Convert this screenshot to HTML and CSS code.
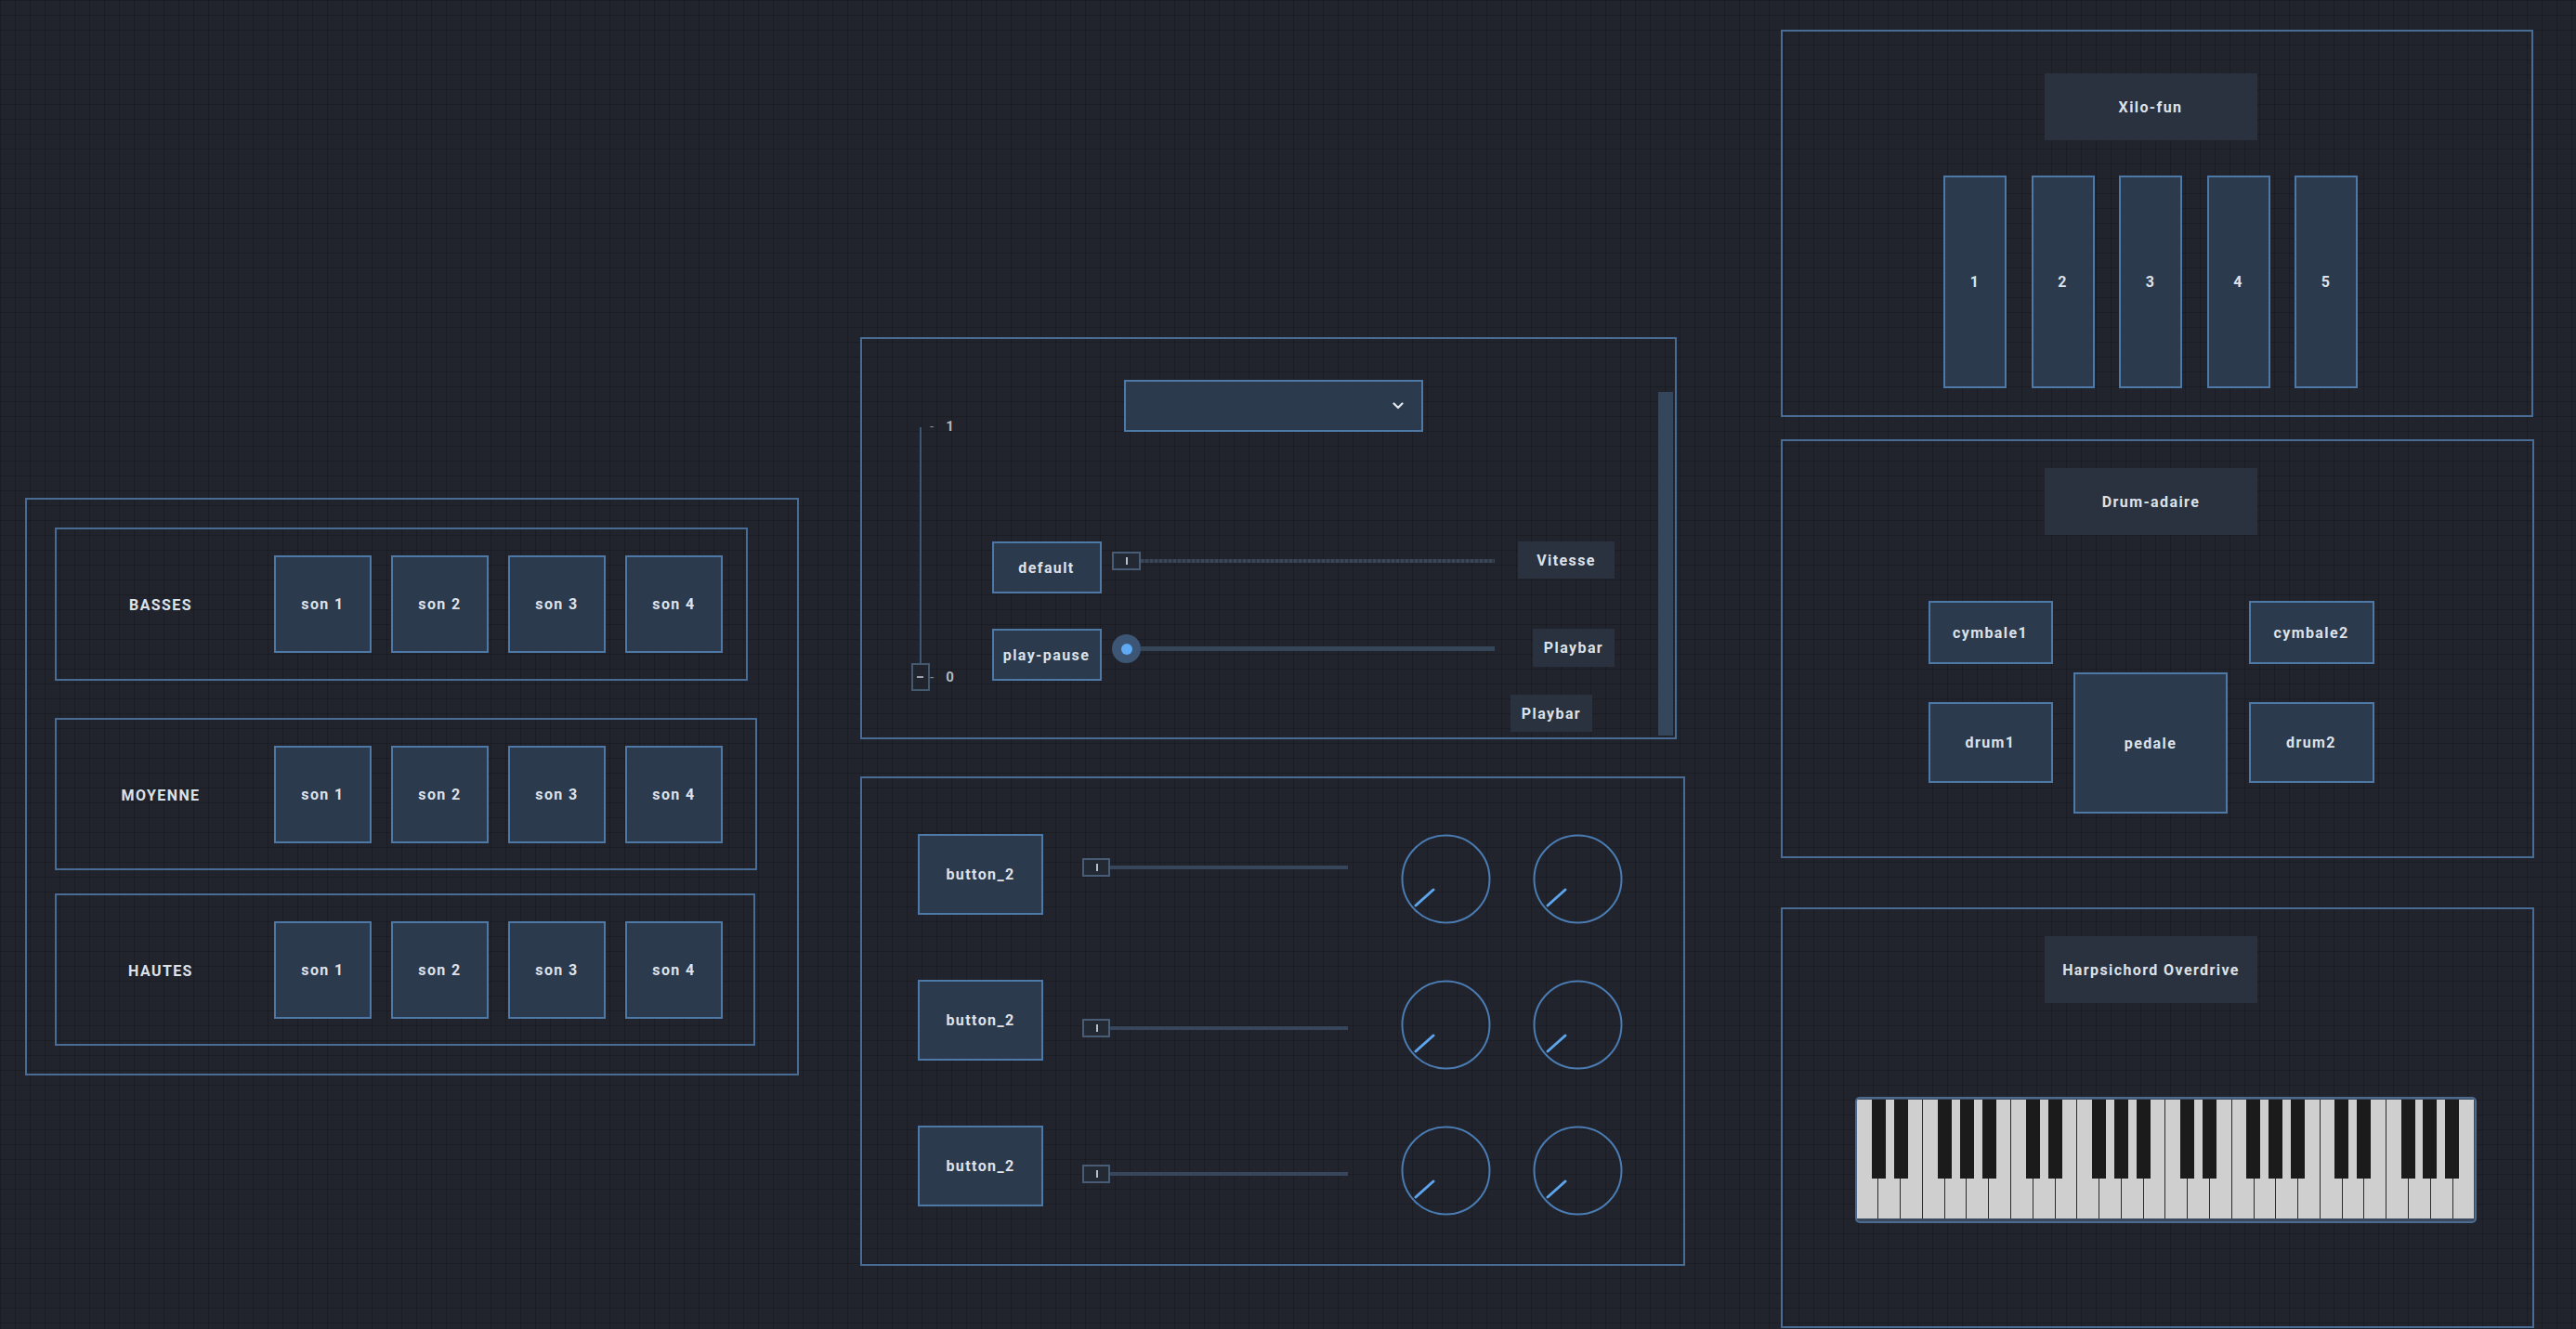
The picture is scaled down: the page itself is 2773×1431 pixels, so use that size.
FILE: index.html
```html
<!DOCTYPE html>
<html lang="en">
<head>
  <meta charset="UTF-8" />
  <title>Soundboard</title>
  <link rel="stylesheet" href="styles.css">
</head>
<body>
  <div class="canvas">

    <!-- left: sound banks -->
    <div class="col col-left">
      <div class="panel panel-banks">
        <div class="bank">
          <div class="bank-label">BASSES</div>
          <div class="pad">son 1</div>
          <div class="pad">son 2</div>
          <div class="pad">son 3</div>
          <div class="pad">son 4</div>
        </div>
        <div class="bank bank-wide bank-mid">
          <div class="bank-label">MOYENNE</div>
          <div class="pad">son 1</div>
          <div class="pad">son 2</div>
          <div class="pad">son 3</div>
          <div class="pad">son 4</div>
        </div>
        <div class="bank bank-wide bank-high">
          <div class="bank-label">HAUTES</div>
          <div class="pad">son 1</div>
          <div class="pad">son 2</div>
          <div class="pad">son 3</div>
          <div class="pad">son 4</div>
        </div>
      </div>
    </div>

    <!-- middle: player + mixer -->
    <div class="col col-mid">
      <div class="panel panel-player">
        <div class="vslider-col">
          <div class="vslider">
            <div class="vslider-track"></div>
            <div class="vtick vtick-top"><span class="dash">-</span><span class="num">1</span></div>
            <div class="vtick vtick-bottom"><span class="dash">-</span><span class="num">0</span></div>
            <div class="vslider-thumb"><span></span></div>
          </div>
        </div>

        <div class="player-main">
          <div class="dropdown">
            <svg class="chevron" width="12" height="8" viewBox="0 0 12 8"><polyline points="1.5,1.5 6,6 10.5,1.5" fill="none" stroke="#e3e8ef" stroke-width="2.2" stroke-linecap="round" stroke-linejoin="round"/></svg>
          </div>

          <div class="player-row">
            <div class="btn btn-player">default</div>
            <div class="slider slider-square slider-speed">
              <div class="thumb-square"><span></span></div>
              <div class="track track-dashed"></div>
            </div>
            <div class="tag tag-speed">Vitesse</div>
          </div>

          <div class="player-row player-row-2">
            <div class="btn btn-player">play-pause</div>
            <div class="slider slider-round">
              <div class="thumb-round"><span></span></div>
              <div class="track track-play"></div>
            </div>
            <div class="tag tag-play">Playbar</div>
          </div>

          <div class="tag tag-play tag-play-2">Playbar</div>
        </div>

        <div class="scrollbar"></div>
      </div>

      <div class="panel panel-mixer">
        <div class="mix-row">
          <div class="btn btn-mix">button_2</div>
          <div class="slider slider-square slider-mix slider-up">
            <div class="thumb-square"><span></span></div>
            <div class="track track-mix"></div>
          </div>
          <svg class="knob" width="97" height="97" viewBox="0 0 97 97"><circle cx="48.5" cy="48.5" r="47" fill="none" stroke="#4a7cb3" stroke-width="2"/><line x1="35" y1="60" x2="16" y2="77" stroke="#5ca4eb" stroke-width="3" stroke-linecap="round"/></svg>
          <svg class="knob knob-2" width="97" height="97" viewBox="0 0 97 97"><circle cx="48.5" cy="48.5" r="47" fill="none" stroke="#4a7cb3" stroke-width="2"/><line x1="35" y1="60" x2="16" y2="77" stroke="#5ca4eb" stroke-width="3" stroke-linecap="round"/></svg>
        </div>
        <div class="mix-row">
          <div class="btn btn-mix">button_2</div>
          <div class="slider slider-square slider-mix">
            <div class="thumb-square"><span></span></div>
            <div class="track track-mix"></div>
          </div>
          <svg class="knob" width="97" height="97" viewBox="0 0 97 97"><circle cx="48.5" cy="48.5" r="47" fill="none" stroke="#4a7cb3" stroke-width="2"/><line x1="35" y1="60" x2="16" y2="77" stroke="#5ca4eb" stroke-width="3" stroke-linecap="round"/></svg>
          <svg class="knob knob-2" width="97" height="97" viewBox="0 0 97 97"><circle cx="48.5" cy="48.5" r="47" fill="none" stroke="#4a7cb3" stroke-width="2"/><line x1="35" y1="60" x2="16" y2="77" stroke="#5ca4eb" stroke-width="3" stroke-linecap="round"/></svg>
        </div>
        <div class="mix-row">
          <div class="btn btn-mix">button_2</div>
          <div class="slider slider-square slider-mix">
            <div class="thumb-square"><span></span></div>
            <div class="track track-mix"></div>
          </div>
          <svg class="knob" width="97" height="97" viewBox="0 0 97 97"><circle cx="48.5" cy="48.5" r="47" fill="none" stroke="#4a7cb3" stroke-width="2"/><line x1="35" y1="60" x2="16" y2="77" stroke="#5ca4eb" stroke-width="3" stroke-linecap="round"/></svg>
          <svg class="knob knob-2" width="97" height="97" viewBox="0 0 97 97"><circle cx="48.5" cy="48.5" r="47" fill="none" stroke="#4a7cb3" stroke-width="2"/><line x1="35" y1="60" x2="16" y2="77" stroke="#5ca4eb" stroke-width="3" stroke-linecap="round"/></svg>
        </div>
      </div>
    </div>

    <!-- right: instruments -->
    <div class="col col-right">
      <div class="panel panel-inst panel-xylo">
        <div class="title-box">Xilo-fun</div>
        <div class="xylo">
          <div class="btn bar">1</div>
          <div class="btn bar">2</div>
          <div class="btn bar">3</div>
          <div class="btn bar">4</div>
          <div class="btn bar">5</div>
        </div>
      </div>

      <div class="panel panel-inst panel-drum">
        <div class="title-box">Drum-adaire</div>
        <div class="drumkit">
          <div class="drum-col">
            <div class="btn cymbal">cymbale1</div>
            <div class="btn drum">drum1</div>
          </div>
          <div class="btn pedal">pedale</div>
          <div class="drum-col drum-col-right">
            <div class="btn cymbal">cymbale2</div>
            <div class="btn drum">drum2</div>
          </div>
        </div>
      </div>

      <div class="panel panel-inst panel-harp">
        <div class="title-box">Harpsichord Overdrive</div>
        <div class="keyboard">
          <div class="white-keys">
            <div class="wkey"></div><div class="wkey"></div><div class="wkey"></div><div class="wkey"></div><div class="wkey"></div><div class="wkey"></div><div class="wkey"></div>
            <div class="wkey"></div><div class="wkey"></div><div class="wkey"></div><div class="wkey"></div><div class="wkey"></div><div class="wkey"></div><div class="wkey"></div>
            <div class="wkey"></div><div class="wkey"></div><div class="wkey"></div><div class="wkey"></div><div class="wkey"></div><div class="wkey"></div><div class="wkey"></div>
            <div class="wkey"></div><div class="wkey"></div><div class="wkey"></div><div class="wkey"></div><div class="wkey"></div><div class="wkey"></div><div class="wkey"></div>
          </div>
          <div class="bkey" style="left: 3.5714%"></div>
          <div class="bkey" style="left: 7.1429%"></div>
          <div class="bkey" style="left: 14.2857%"></div>
          <div class="bkey" style="left: 17.8571%"></div>
          <div class="bkey" style="left: 21.4286%"></div>
          <div class="bkey" style="left: 28.5714%"></div>
          <div class="bkey" style="left: 32.1429%"></div>
          <div class="bkey" style="left: 39.2857%"></div>
          <div class="bkey" style="left: 42.8571%"></div>
          <div class="bkey" style="left: 46.4286%"></div>
          <div class="bkey" style="left: 53.5714%"></div>
          <div class="bkey" style="left: 57.1429%"></div>
          <div class="bkey" style="left: 64.2857%"></div>
          <div class="bkey" style="left: 67.8571%"></div>
          <div class="bkey" style="left: 71.4286%"></div>
          <div class="bkey" style="left: 78.5714%"></div>
          <div class="bkey" style="left: 82.1429%"></div>
          <div class="bkey" style="left: 89.2857%"></div>
          <div class="bkey" style="left: 92.8571%"></div>
          <div class="bkey" style="left: 96.4286%"></div>
        </div>
      </div>
    </div>

  </div>
</body>
</html>
```

FILE: styles.css
```css
html, body {
  margin: 0;
  padding: 0;
}

body {
  width: 2773px;
  height: 1431px;
  overflow: hidden;
  font-family: Roboto, "Liberation Sans", sans-serif;
  font-size: 16px;
  font-weight: 700;
  letter-spacing: 1.4px;
  color: #dde2ea;
  background-color: #21242c;
  background-image:
    linear-gradient(rgba(10, 12, 16, 0.28) 1px, transparent 1px),
    linear-gradient(90deg, rgba(10, 12, 16, 0.28) 1px, transparent 1px);
  background-size: 16px 16px;
}

* {
  box-sizing: border-box;
}

.canvas {
  display: flex;
  align-items: flex-start;
}

.col {
  display: flex;
  flex-direction: column;
}

.col-left {
  margin-left: 27px;
  margin-top: 536px;
}

.col-mid {
  margin-left: 66px;
  margin-top: 363px;
}

.col-right {
  margin-left: 103px;
  margin-top: 32px;
}

.panel {
  border: 2px solid #486c94;
}

/* generic button look */
.btn, .pad {
  display: flex;
  align-items: center;
  justify-content: center;
  background: #2c3a4d;
  border: 2px solid #4e78a5;
}

/* ---------- sound banks ---------- */
.panel-banks {
  width: 833px;
  height: 622px;
  padding: 30px;
}

.bank {
  display: flex;
  align-items: center;
  width: 746px;
  height: 165px;
  border: 2px solid #486c94;
}

.bank-wide {
  height: 164px;
}

.bank-mid {
  width: 756px;
  margin-top: 40px;
}

.bank-high {
  width: 754px;
  margin-top: 25px;
}

.bank-label {
  width: 224px;
  margin-right: 10px;
  margin-top: 2px;
  text-align: center;
}

.pad {
  width: 105px;
  height: 105px;
  margin-right: 21px;
}

/* ---------- player ---------- */
.panel-player {
  display: flex;
  width: 879px;
  height: 433px;
}

.vslider-col {
  width: 139.5px;
  flex-shrink: 0;
}

.vslider {
  position: relative;
  margin-left: 53px;
  margin-top: 95px;
  width: 60px;
  height: 285px;
}

.vslider-track {
  position: absolute;
  left: 9px;
  top: 0;
  width: 2px;
  height: 256px;
  background: #3c5878;
}

.vslider-thumb {
  position: absolute;
  left: 0;
  top: 254px;
  width: 20px;
  height: 30px;
  border: 2px solid #44586e;
  background: rgba(33, 38, 46, 0.6);
}

.vslider-thumb span {
  position: absolute;
  left: 4px;
  top: 12px;
  width: 7px;
  height: 1.5px;
  background: #9aa4b0;
}

.vtick {
  position: absolute;
  left: 20px;
  height: 18px;
  line-height: 18px;
  font-size: 15px;
  letter-spacing: 0;
}

.vtick-top {
  top: -10px;
}

.vtick-bottom {
  top: 260px;
}

.vtick .dash {
  color: #7f8a97;
  font-weight: 400;
}

.vtick .num {
  margin-left: 13px;
  color: #b1b8c1;
  font-weight: 700;
}

.player-main {
  width: 671px;
  flex-shrink: 0;
}

.dropdown {
  position: relative;
  width: 322px;
  height: 56px;
  margin-top: 44px;
  margin-left: 142.5px;
  background: #2c3a4d;
  border: 2px solid #4e78a5;
}

.chevron {
  position: absolute;
  right: 19px;
  top: 22px;
}

.player-row {
  display: flex;
  align-items: flex-start;
  margin-top: 118px;
}

.player-row-2 {
  margin-top: 38px;
}

.btn-player {
  width: 118px;
  height: 56px;
}

.slider {
  display: flex;
  align-items: center;
}

.slider-speed {
  margin-left: 11.5px;
  margin-top: 11px;
}

.slider-round {
  margin-left: 11.5px;
  margin-top: 6px;
}

.thumb-square {
  position: relative;
  width: 31px;
  height: 20px;
  border: 2px solid #485d75;
  background: #232a34;
  flex-shrink: 0;
}

.thumb-square span {
  position: absolute;
  left: 13px;
  top: 4px;
  width: 1.5px;
  height: 8px;
  background: #b6bfca;
}

.thumb-round {
  display: flex;
  align-items: center;
  justify-content: center;
  width: 31px;
  height: 31px;
  border-radius: 50%;
  background: #3d5676;
  flex-shrink: 0;
}

.thumb-round span {
  width: 12px;
  height: 12px;
  border-radius: 50%;
  background: #5eaaf5;
}

.track {
  height: 4px;
}

.track-dashed {
  width: 381px;
  background: repeating-linear-gradient(90deg, #3b4758 0 3px, #2e3845 3px 5px);
}

.track-play {
  width: 381px;
  height: 5px;
  background: #354659;
}

.tag {
  display: flex;
  align-items: center;
  justify-content: center;
  background: #29323e;
}

.tag-speed {
  width: 104px;
  height: 40px;
  margin-left: 25px;
}

.tag-play {
  width: 88px;
  height: 41px;
  margin-left: 41px;
}

.tag-play-2 {
  margin-top: 15px;
  margin-left: 558.5px;
  height: 40px;
}

.scrollbar {
  width: 16px;
  height: 370px;
  margin-top: 57px;
  margin-left: auto;
  margin-right: 2px;
  background: #34465b;
}

/* ---------- mixer ---------- */
.panel-mixer {
  width: 888px;
  height: 527px;
  margin-top: 40px;
  padding: 60px 0 0 60px;
}

.mix-row {
  display: flex;
  align-items: flex-start;
  height: 97px;
  margin-bottom: 60px;
}

.btn-mix {
  width: 135px;
  height: 87px;
}

.slider-mix {
  margin-left: 42px;
  margin-top: 42px;
}

.slider-up {
  margin-top: 26px;
}

.slider-mix .thumb-square {
  width: 30px;
}

.track-mix {
  width: 256px;
  background: #37465a;
}

.knob {
  display: block;
  margin-left: 57px;
}

.knob-2 {
  margin-left: 45px;
}

/* ---------- instruments ---------- */
.panel-inst {
  display: flex;
  flex-direction: column;
  align-items: center;
  padding-right: 14px;
}

.title-box {
  display: flex;
  align-items: center;
  justify-content: center;
  width: 229px;
  height: 72px;
  background: #29323e;
}

.panel-xylo {
  width: 810px;
  height: 417px;
}

.panel-xylo .title-box {
  margin-top: 45px;
}

.xylo {
  display: flex;
  gap: 26.5px;
  margin-top: 38px;
}

.bar {
  width: 68px;
  height: 229px;
}

.panel-drum {
  width: 811px;
  height: 451px;
  margin-top: 24px;
}

.panel-drum .title-box {
  margin-top: 29px;
}

.drumkit {
  display: flex;
  align-items: flex-start;
  gap: 22.5px;
  margin-top: 71px;
}

.drum-col {
  display: flex;
  flex-direction: column;
  gap: 41px;
  width: 134px;
}

.drum-col-right {
  width: 135px;
}

.cymbal {
  height: 68px;
}

.drum {
  height: 87px;
}

.pedal {
  width: 166px;
  height: 152px;
  margin-top: 77px;
}

.panel-harp {
  width: 811px;
  height: 453px;
  margin-top: 53px;
}

.panel-harp .title-box {
  margin-top: 29px;
}

.keyboard {
  position: relative;
  width: 669px;
  height: 136px;
  margin-top: 101px;
  margin-left: 31px;
  padding: 1px 0 3px;
  border: 2px solid #4d6b90;
  border-radius: 5px;
  background: #3a4a5e;
  overflow: hidden;
}

.white-keys {
  display: flex;
  height: 100%;
}

.wkey {
  flex: 1;
  background: #cfcfcf;
  border-right: 1px solid #2b2b2b;
}

.wkey:last-child {
  border-right: none;
}

.bkey {
  position: absolute;
  top: 1px;
  width: 15px;
  height: 85px;
  margin-left: -7.5px;
  background: #1b1b1b;
}
```
